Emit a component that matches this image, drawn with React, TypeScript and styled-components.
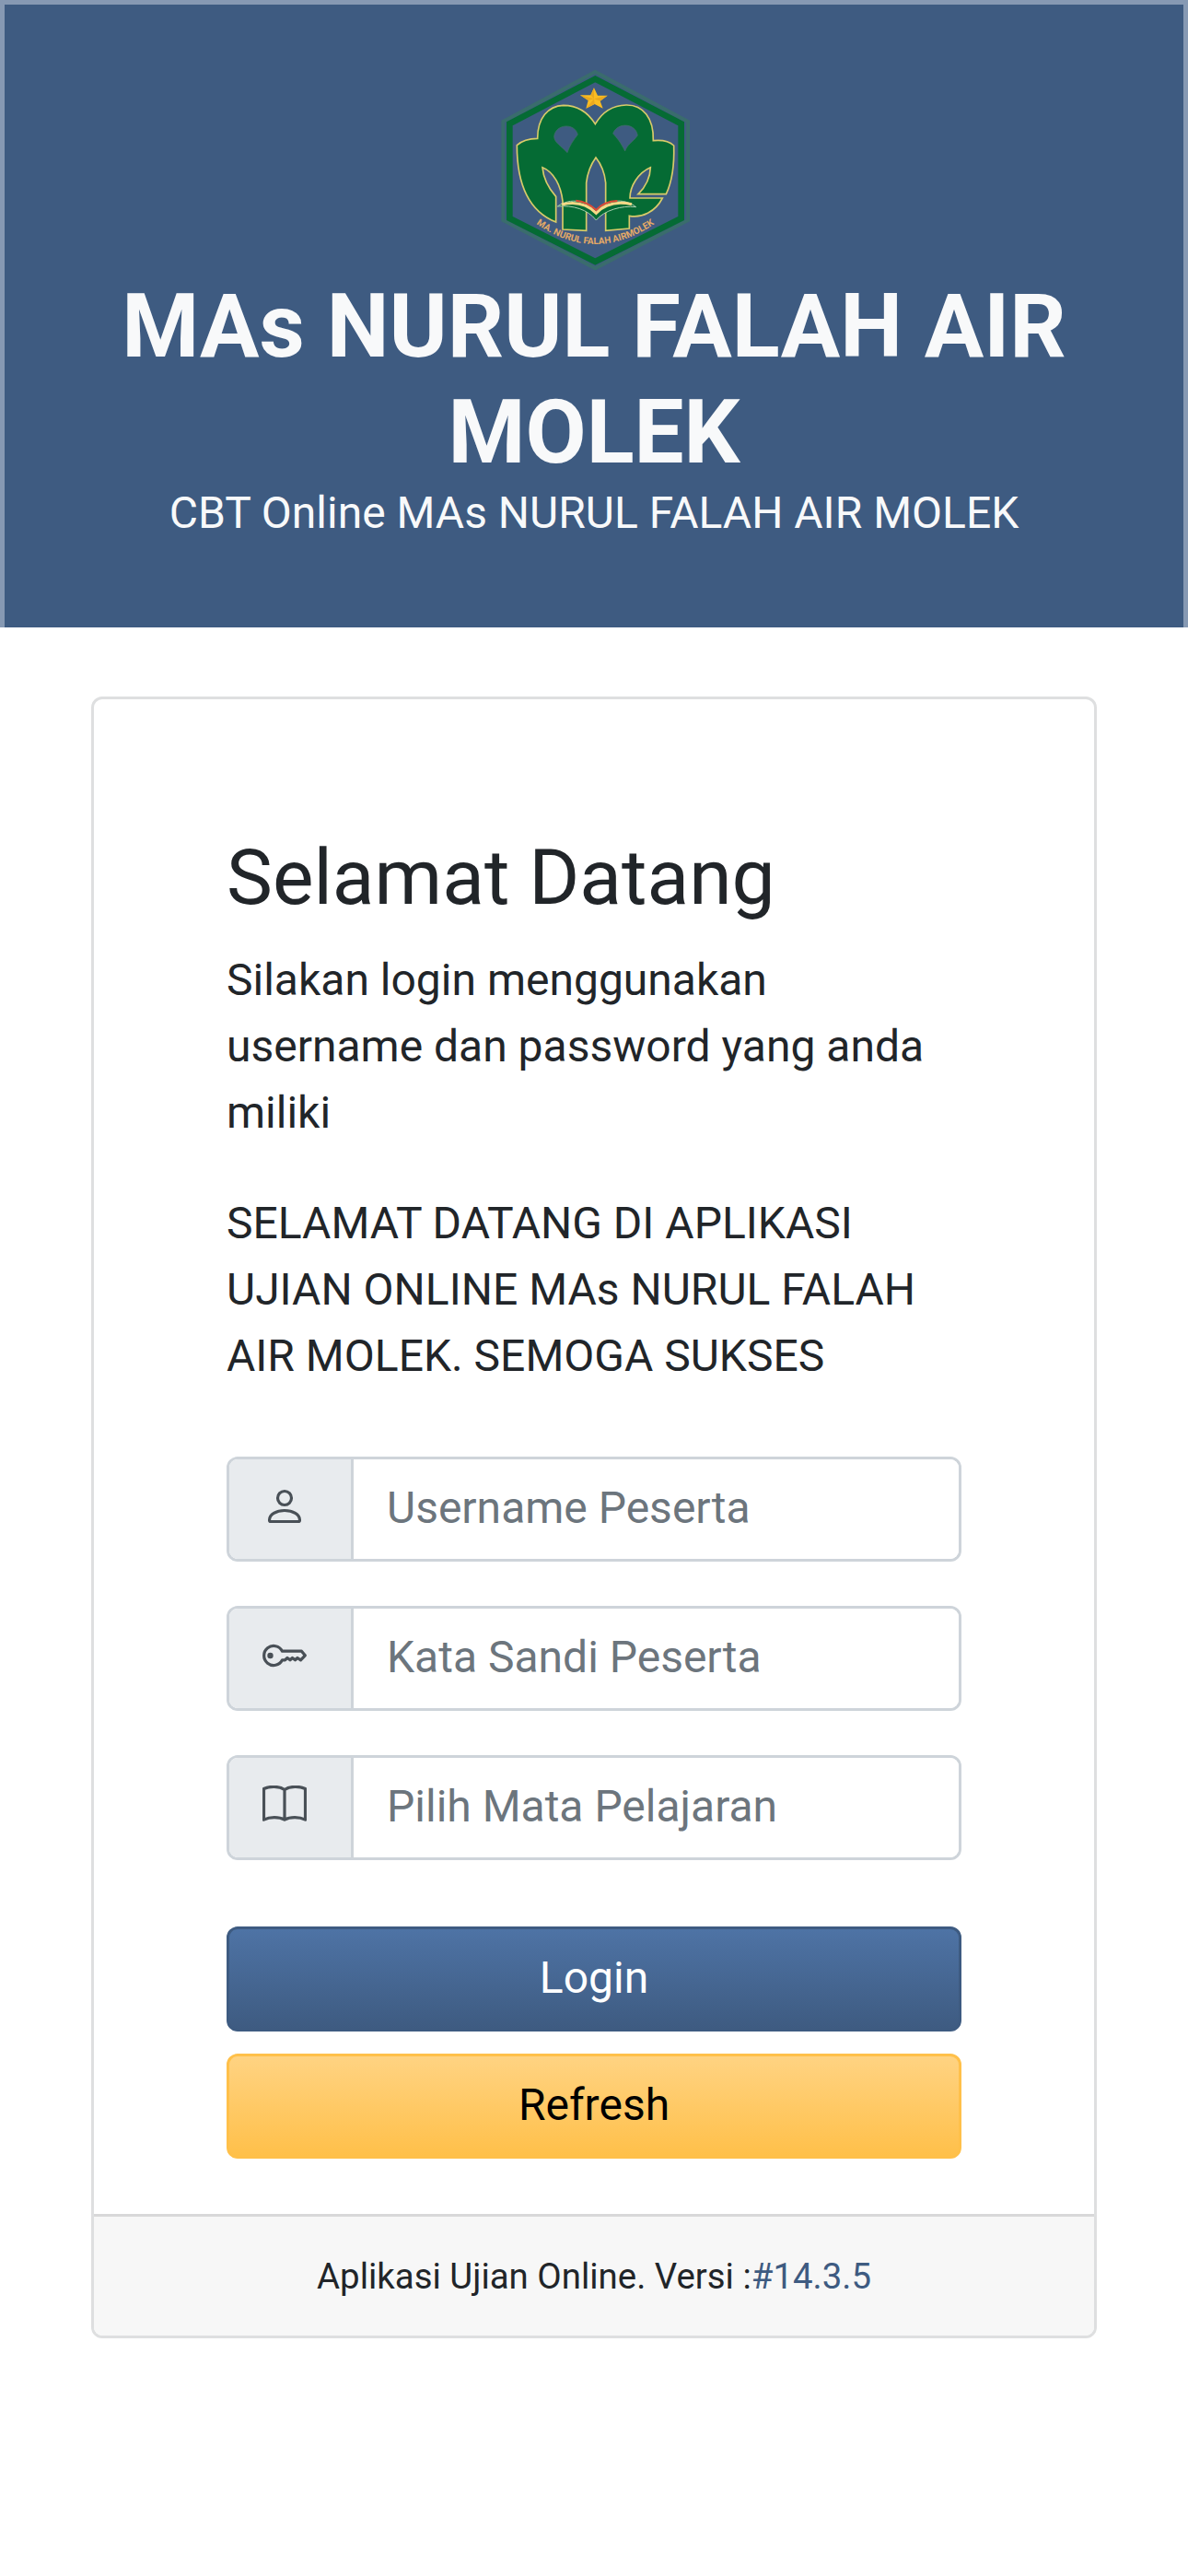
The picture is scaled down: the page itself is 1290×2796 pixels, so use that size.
import styled, { createGlobalStyle } from 'styled-components';

const GlobalStyle = createGlobalStyle`
    *, *::before, *::after {
        box-sizing: border-box;
    }
    body {
        margin: 0;
        background-color: #fff;
        color: #212529;
        font-family: Roboto, 'Liberation Sans', sans-serif;
        font-size: 48px;
        line-height: 1.5;
    }
`;

const Page = styled.div`
    width: 100%;
    min-height: 2796px;
`;

//Header
const Hero = styled.header`
    height: 681px;
    padding-top: 65px;
    background-color: #3e5b81;
    border: 5px solid #8699b3;
    border-bottom: 0;
    color: #f8f9fa;
    text-align: center;
`;

const LogoSvg = styled.svg`
    display: block;
    width: 230px;
    height: 240px;
    margin: -5px auto -8px;
`;

const SchoolName = styled.h1`
    margin: 0 auto;
    width: 1090px;
    font-size: 96px;
    font-weight: 700;
    line-height: 115.2px;
`;

const Tagline = styled.p`
    margin: 0;
    line-height: 59px;
`;

//Card
const Card = styled.main`
    width: 1092px;
    margin: 75px auto 0;
    border: 3px solid #dedfe0;
    border-radius: 12px;
    overflow: hidden;
`;

const CardBody = styled.form`
    height: 1644px;
    padding: 144px 144px 0;
`;

const Welcome = styled.h2`
    margin: 0 0 24px;
    font-size: 84px;
    font-weight: 400;
    line-height: 100.8px;
`;

const Info = styled.p`
    margin: 0 0 48px;
`;

const Fields = styled.div`
    display: flex;
    flex-direction: column;
    gap: 48px;
    margin-top: 73px;
`;

const InputGroup = styled.label`
    display: flex;
    height: 114px;
    border: 3px solid #ced4da;
    border-radius: 12px;
    overflow: hidden;
`;

const Addon = styled.span`
    display: flex;
    flex: none;
    width: 135px;
    padding: 30px 0 0 36px;
    background-color: #e8ebee;
    border-right: 3px solid #ced4da;

    svg {
        width: 48px;
        height: 48px;
        fill: none;
        stroke: #495057;
        stroke-width: 3.2;
    }
`;

const Input = styled.input`
    flex: 1;
    min-width: 0;
    padding: 0 36px 2px;
    border: 0;
    outline: 0;
    background-color: #fff;
    color: #212529;
    font: inherit;

    &::placeholder {
        color: #6c757d;
        opacity: 1;
    }
`;

const Buttons = styled.div`
    display: flex;
    flex-direction: column;
    gap: 24px;
    margin-top: 72px;
`;

const Button = styled.button<{ $variant: 'primary' | 'warning' }>`
    height: 114px;
    padding: 0 0 2px;
    border: 3px solid ${({ $variant }) => ($variant === 'primary' ? '#3e5b81' : '#ffc04a')};
    border-radius: 12px;
    background: ${({ $variant }) =>
        $variant === 'primary' ? 'linear-gradient(#4e73a5, #3e5b81)' : 'linear-gradient(#ffd382, #ffc04a)'};
    color: ${({ $variant }) => ($variant === 'primary' ? '#fff' : '#000')};
    font: inherit;
`;

const CardFooter = styled.footer`
    height: 132px;
    border-top: 3px solid #d8d8d9;
    background-color: #f7f7f7;
    font-size: 38.4px;
    line-height: 130px;
    text-align: center;
`;

const Version = styled.a`
    color: #3e5b81;
    text-decoration: none;
`;

const UserIcon = () => (
    <svg viewBox="0 0 48 48">
        <circle cx="24" cy="12" r="7.5" />
        <path
            d="M9 37.500H39Q40.500 37.500 40.500 36C40.500 29.500 33 25.500 24 25.500S7.500 29.500 7.500 36Q7.500 37.500 9 37.500Z"
            strokeLinejoin="round"
        />
    </svg>
);

const KeyIcon = () => (
    <svg viewBox="0 0 48 48">
        <path
            d="M21.500 16.200A10.500 10.500 0 1 0 21.500 25.800H24.500L27 23.500 30 25.800 32.500 23.500 35.500 25.800 38 23.500 41.500 25.800 46.300 20.800 42.500 16.200Z"
            strokeLinejoin="round"
        />
        <circle cx="8.500" cy="21" r="1.600" />
    </svg>
);

const BookIcon = () => (
    <svg viewBox="0 0 48 48">
        <path
            d="M24 4.500C18 0.500 8 0.500 1.500 3.500V37.200C8 33.700 18 33.700 24 37.200C30 33.700 40 33.700 46.500 37.200V3.500C40 0.500 30 0.500 24 4.500ZM24 4.500V37.200"
            strokeLinejoin="round"
        />
    </svg>
);

const Logo = () => (
    <LogoSvg viewBox="0 0 690 720">
        <g fill="none" strokeLinejoin="miter">
            <path d="M349 39L651 201V522L349 679L49 522V201Z" stroke="#3a6c6d" strokeWidth="12" />
            <path d="M349 62L629 208V516L349 657L70 516V208Z" stroke="#056b34" strokeWidth="20" />
        </g>
        <path
            d="M345 91L357 116L389 116L365 134L374 158L347 144L319 158L326 132L300 115L334 115Z"
            fill="#fbbd22"
        />
        <path d="M345 91V127L334 115ZM389 116L345 127L365 134ZM347 144L345 127L319 158ZM300 115L345 127L326 132Z" fill="#eba91f" />
        <g fill="#056b34" stroke="#d8cb69" strokeWidth="5">
            <path d="M349 209C325 170 290 148 245 148C195 150 161 190 161 256C135 256 110 263 94 278C94 390 125 490 221 528V445C197 418 180 385 177 350C215 365 237 410 243 460V552L320 556V400C324 367 335 340 351 318C370 342 380 370 383 400V556L460 549V508C500 516 545 495 568 450H462C462 410 490 367 529 350C528 385 510 416 489 437H580C602 390 607 340 605 279C590 265 566 260 538 263C540 190 505 146 450 147C405 148 370 173 349 209Z" />
        </g>
        <g fill="#3e5b81" stroke="#437369" strokeWidth="2">
            <path d="M258 302C240 281 215 270 215 249C220 208 282 204 292 243C277 263 266 278 258 302Z" />
            <path d="M446 297C433 270 420 254 407 240C420 203 480 204 487 246C470 270 454 274 446 297Z" />
        </g>
        <path
            d="M226 477C270 447 320 457 352 496C385 455 440 447 482 479C435 473 378 490 352 522C325 487 276 472 226 477Z"
            fill="#056b34"
            stroke="#a9cfae"
            strokeWidth="3"
        />
        <path d="M240 471C292 458 325 472 352 499C380 470 415 458 468 470" fill="none" stroke="#f5d987" strokeWidth="9" />
        <path d="M286 458C318 461 336 474 352 489C370 469 395 460 421 459" fill="none" stroke="#dc4a35" strokeWidth="6" />
        <path id="motto" d="M140 522Q348 678 559 522" fill="none" />
        <text fill="#e5aa66" fontSize="30" fontWeight="700" textAnchor="middle">
            <textPath href="#motto" startOffset="50%">
                MA. NURUL FALAH AIRMOLEK
            </textPath>
        </text>
    </LogoSvg>
);

const fields = [
    { placeholder: 'Username Peserta', type: 'text', Icon: UserIcon },
    { placeholder: 'Kata Sandi Peserta', type: 'password', Icon: KeyIcon },
    { placeholder: 'Pilih Mata Pelajaran', type: 'text', Icon: BookIcon },
];

function App() {
    return (
        <Page>
            <GlobalStyle />
            <Hero>
                <Logo />
                <SchoolName>MAs NURUL FALAH AIR MOLEK</SchoolName>
                <Tagline>CBT Online MAs NURUL FALAH AIR MOLEK</Tagline>
            </Hero>
            <Card>
                <CardBody>
                    <Welcome>Selamat Datang</Welcome>
                    <Info>Silakan login menggunakan username dan password yang anda miliki</Info>
                    <Info>SELAMAT DATANG DI APLIKASI UJIAN ONLINE MAs NURUL FALAH AIR MOLEK. SEMOGA SUKSES</Info>
                    <Fields>
                        {fields.map(({ placeholder, type, Icon }) => (
                            <InputGroup key={placeholder}>
                                <Addon>
                                    <Icon />
                                </Addon>
                                <Input type={type} placeholder={placeholder} />
                            </InputGroup>
                        ))}
                    </Fields>
                    <Buttons>
                        <Button type="button" $variant="primary">
                            Login
                        </Button>
                        <Button type="button" $variant="warning">
                            Refresh
                        </Button>
                    </Buttons>
                </CardBody>
                <CardFooter>
                    Aplikasi Ujian Online. Versi :<Version>#14.3.5</Version>
                </CardFooter>
            </Card>
        </Page>
    );
}

export default App;
